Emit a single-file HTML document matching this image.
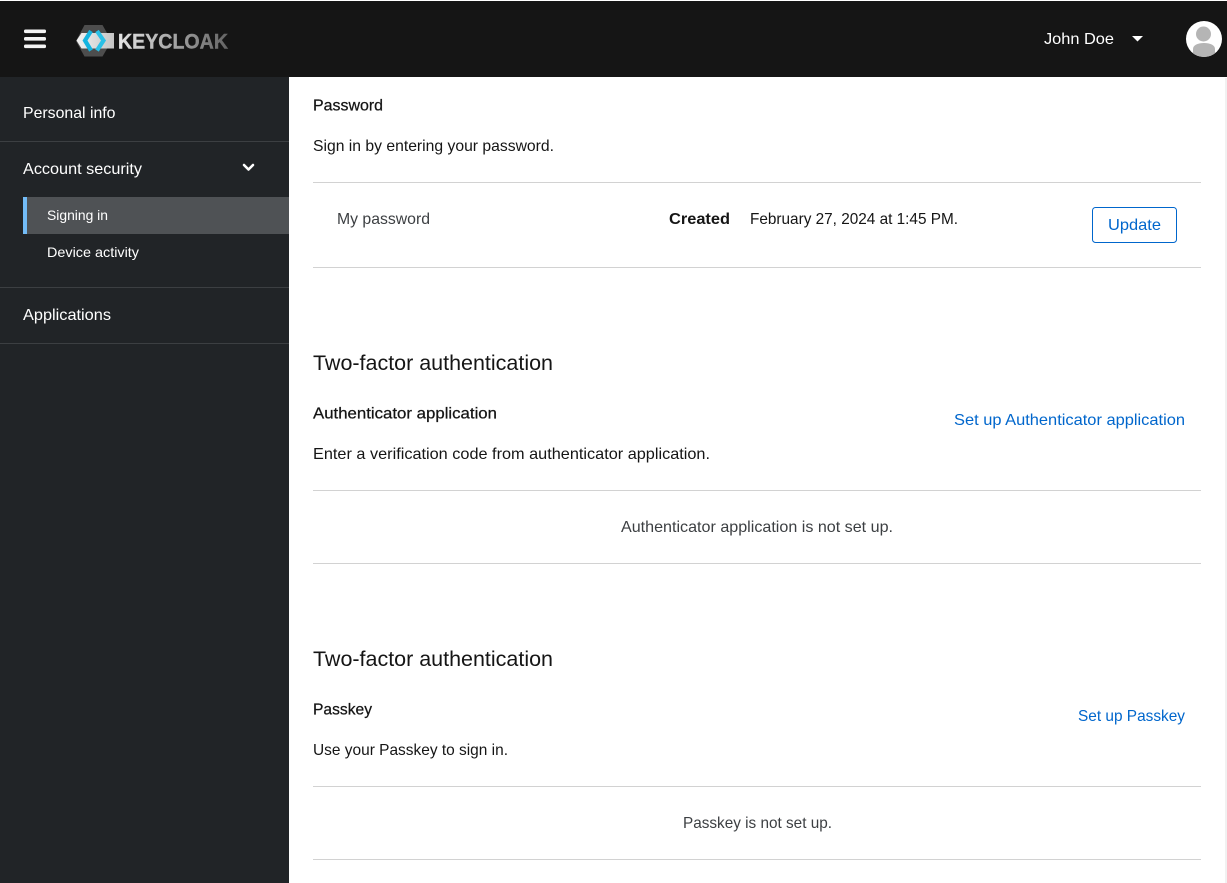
<!DOCTYPE html>
<html lang="en"><head><meta charset="utf-8"><title>Keycloak Account Console</title>
<style>
html,body{margin:0;padding:0;width:1227px;height:883px;overflow:hidden;background:#fff}
svg{display:block}
text{font-family:"Liberation Sans",sans-serif;font-size:16px;fill:#151515}
.s{fill:#fff}
.m{stroke:#151515;stroke-width:.25px}
.l{fill:#06c}
.g{fill:#3c3f42}
</style></head><body>
<svg width="1227" height="883" viewBox="0 0 1227 883" xmlns="http://www.w3.org/2000/svg">
<defs><linearGradient id="kc" gradientUnits="userSpaceOnUse" x1="118" x2="228" y1="0" y2="0"><stop offset="0" stop-color="#e6e6e6"/><stop offset="1" stop-color="#646464"/></linearGradient>
<linearGradient id="bar" x1="0" x2="1" y1="0" y2="0"><stop offset="0" stop-color="#f2f2f2"/><stop offset="1" stop-color="#c4c4c4"/></linearGradient></defs>
<rect width="1227" height="883" fill="#fff"/>
<rect x="0" y="1" width="1227" height="76" fill="#151515"/>
<rect x="0" y="77" width="289" height="806" fill="#212427"/>
<rect x="1225" y="78" width="2" height="805" fill="#f1f1f1"/>

<g fill="#f4f4f4"><rect x="24" y="29.500" width="22" height="3.600" rx="1.500"/><rect x="24" y="37" width="22" height="3.600" rx="1.500"/><rect x="24" y="44.500" width="22" height="3.600" rx="1.500"/></g>

<path d="M84.500 25H102.500L111.500 41L102.500 56.500H84.500L76 41Z" fill="#4d4d4d"/>
<path d="M76.500 40.500L81.500 33H114V48.500H81.500Z" fill="url(#bar)"/>
<path d="M91 31L85 40.500L91 50.500" fill="none" stroke="#14b4e0" stroke-width="4.200"/>
<path d="M97 31L103.500 40.500L97 50.500" fill="none" stroke="#2ac0e6" stroke-width="4.200"/>
<text x="118" y="48.500" textLength="110" lengthAdjust="spacingAndGlyphs" style="font-size:21.500px;font-weight:bold;fill:url(#kc);stroke:url(#kc);stroke-width:.4px">KEYCLOAK</text>

<text class="s" x="1044" y="44" textLength="70" lengthAdjust="spacingAndGlyphs">John Doe</text>
<path d="M1132 36H1143L1137.500 41.500Z" fill="#fff"/>
<circle cx="1204" cy="39" r="18" fill="#fff"/>
<clipPath id="av"><circle cx="1204" cy="39" r="18"/></clipPath>
<g clip-path="url(#av)" fill="#b5b5b5"><circle cx="1203.500" cy="34" r="7.500"/><path d="M1193 57V49C1193 45 1198 43 1204 43C1210 43 1215 45 1215 49V57Z"/></g>

<rect x="0" y="141" width="289" height="1" fill="#3c3f42"/>
<rect x="0" y="287" width="289" height="1" fill="#3c3f42"/>
<rect x="0" y="343" width="289" height="1" fill="#3c3f42"/>
<text class="s" x="23" y="118" textLength="92.500" lengthAdjust="spacingAndGlyphs">Personal info</text>
<text class="s" x="23" y="174" textLength="119" lengthAdjust="spacingAndGlyphs">Account security</text>
<path d="M244 165L248.500 169.500L253 165" fill="none" stroke="#fff" stroke-width="2.600" stroke-linecap="round" stroke-linejoin="round"/>
<rect x="23" y="197" width="266" height="37" fill="#4f5255"/>
<rect x="23" y="197" width="4" height="37" fill="#73bcf7"/>
<text class="s" x="47" y="220" textLength="61" lengthAdjust="spacingAndGlyphs" style="font-size:14px">Signing in</text>
<text class="s" x="47" y="257" textLength="92" lengthAdjust="spacingAndGlyphs" style="font-size:14px">Device activity</text>
<text class="s" x="23" y="320" textLength="88" lengthAdjust="spacingAndGlyphs">Applications</text>

<text class="m" x="313" y="110.500" textLength="70" lengthAdjust="spacingAndGlyphs">Password</text>
<text x="313" y="151" textLength="241" lengthAdjust="spacingAndGlyphs">Sign in by entering your password.</text>
<rect x="313" y="182" width="888" height="1" fill="#d2d2d2"/>
<text class="g" x="337" y="224" textLength="93" lengthAdjust="spacingAndGlyphs">My password</text>
<text x="669" y="224" textLength="61" lengthAdjust="spacingAndGlyphs" style="font-weight:bold">Created</text>
<text x="750" y="224" textLength="208" lengthAdjust="spacingAndGlyphs">February 27, 2024 at 1:45 PM.</text>
<rect x="1092.500" y="207.500" width="84" height="35" rx="3" fill="#fff" stroke="#06c"/>
<text class="l" x="1108" y="230" textLength="53" lengthAdjust="spacingAndGlyphs">Update</text>
<rect x="313" y="267" width="888" height="1" fill="#d2d2d2"/>

<text x="313" y="370" textLength="240" lengthAdjust="spacingAndGlyphs" style="font-size:21px">Two-factor authentication</text>
<text class="m" x="313" y="418.500" textLength="184" lengthAdjust="spacingAndGlyphs">Authenticator application</text>
<text class="l" x="954" y="425" textLength="231" lengthAdjust="spacingAndGlyphs">Set up Authenticator application</text>
<text x="313" y="459" textLength="397" lengthAdjust="spacingAndGlyphs">Enter a verification code from authenticator application.</text>
<rect x="313" y="490" width="888" height="1" fill="#d2d2d2"/>
<text class="g" x="621" y="532" textLength="272" lengthAdjust="spacingAndGlyphs">Authenticator application is not set up.</text>
<rect x="313" y="563" width="888" height="1" fill="#d2d2d2"/>

<text x="313" y="666" textLength="240" lengthAdjust="spacingAndGlyphs" style="font-size:21px">Two-factor authentication</text>
<text class="m" x="313" y="714.500" textLength="59" lengthAdjust="spacingAndGlyphs">Passkey</text>
<text class="l" x="1078" y="721" textLength="107" lengthAdjust="spacingAndGlyphs">Set up Passkey</text>
<text x="313" y="755" textLength="195" lengthAdjust="spacingAndGlyphs">Use your Passkey to sign in.</text>
<rect x="313" y="786" width="888" height="1" fill="#d2d2d2"/>
<text class="g" x="683" y="828" textLength="149" lengthAdjust="spacingAndGlyphs">Passkey is not set up.</text>
<rect x="313" y="859" width="888" height="1" fill="#d2d2d2"/>
</svg>
</body></html>
